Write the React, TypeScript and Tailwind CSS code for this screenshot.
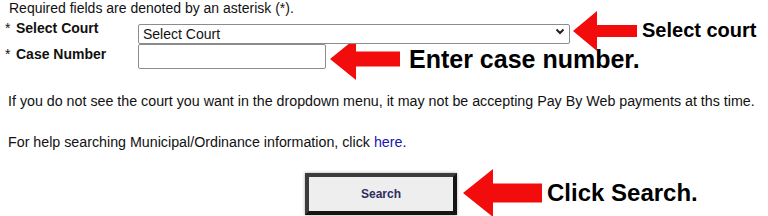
import React from "react";

function Arrow({ w, h, l, t }: { w: number; h: number; l: number; t: number }) {
  const m = h / 2;
  const pts = `0,${m} ${l},0 ${l},${m - t / 2} ${w},${m - t / 2} ${w},${m + t / 2} ${l},${m + t / 2} ${l},${h}`;
  return (
    <svg width={w} height={h} viewBox={`0 0 ${w} ${h}`} className="shrink-0 block">
      <polygon points={pts} fill="#f20c0c" />
    </svg>
  );
}

export default function App() {
  return (
    <div className="w-[768px] h-[216px] overflow-hidden bg-white px-[8px] font-['Liberation_Sans',Arial,sans-serif] text-black">
      <p className="ml-[1px] text-[14px] leading-[16px] text-[#111]">
        Required fields are denoted by an asterisk (*).
      </p>

      <div className="mt-[6px] flex h-[20px] items-start">
        <label className="-ml-[3px] -mt-[2px] flex w-[133px] shrink-0 text-[14px] leading-[16px] text-[#111]">
          <span className="w-[11px]">*</span>
          <span className="font-bold">Select Court</span>
        </label>
        <div className="relative h-[20px] w-[432px] shrink-0">
          <select className="h-full w-full appearance-none rounded-[2px] border border-[#8c8c8c] bg-white pl-[4px] text-[14px] leading-[18px] text-[#111] outline-none">
            <option>Select Court</option>
          </select>
          <svg width="10" height="7" viewBox="0 0 10 7" className="pointer-events-none absolute right-[5px] top-[6px]">
            <path d="M1.5 1.5 L5 5 L8.5 1.5" fill="none" stroke="#222" strokeWidth="2" />
          </svg>
        </div>
        <div className="ml-[3px] -mt-[20px] -mb-[18px] flex items-center gap-[5px] self-center">
          <Arrow w={64} h={40} l={24} t={12} />
          <span className="mb-[2px] text-[20px] font-bold leading-[20px] whitespace-nowrap">Select court</span>
        </div>
      </div>

      <div className="mt-[2px] flex h-[25px] items-start">
        <label className="-ml-[3px] mt-[2px] flex w-[133px] shrink-0 text-[14px] leading-[16px] text-[#111]">
          <span className="w-[11px]">*</span>
          <span className="font-bold">Case Number</span>
        </label>
        <input
          type="text"
          className="h-[25px] w-[188px] shrink-0 rounded-[2px] border border-[#8c8c8c] bg-white outline-none"
        />
        <div className="ml-[4px] -mt-[16px] -mb-[21px] flex items-center gap-[9px] self-center">
          <Arrow w={70} h={42} l={26} t={15} />
          <span className="text-[25px] font-bold leading-[25px] whitespace-nowrap">Enter case number.</span>
        </div>
      </div>

      <p className="mt-[24px] text-[14.25px] leading-[16px] text-[#111] whitespace-nowrap">
        If you do not see the court you want in the dropdown menu, it may not be accepting Pay By Web payments at ths time.
      </p>

      <p className="mt-[25px] text-[14.25px] leading-[16px] text-[#111]">
        For help searching Municipal/Ordinance information, click{" "}
        <a className="text-[#1a14b0]">here</a>.
      </p>

      <div className="mt-[23px] flex h-[42px] items-center">
        <button className="ml-[297px] h-[42px] w-[152px] shrink-0 border-[4px] border-t-[#3c3c3c] border-l-[#3c3c3c] border-r-[#151515] border-b-[#151515] bg-[#eeeeee] text-[12px] font-bold text-[#2d2d5e] shadow-[0_0_3px_rgba(0,0,0,0.35)]">
          Search
        </button>
        <div className="ml-[6px] -mt-[24px] -mb-[22px] flex items-center gap-[5px] self-center">
          <Arrow w={79} h={48} l={30} t={19} />
          <span className="text-[24px] font-bold leading-[24px] whitespace-nowrap">Click Search.</span>
        </div>
      </div>
    </div>
  );
}
